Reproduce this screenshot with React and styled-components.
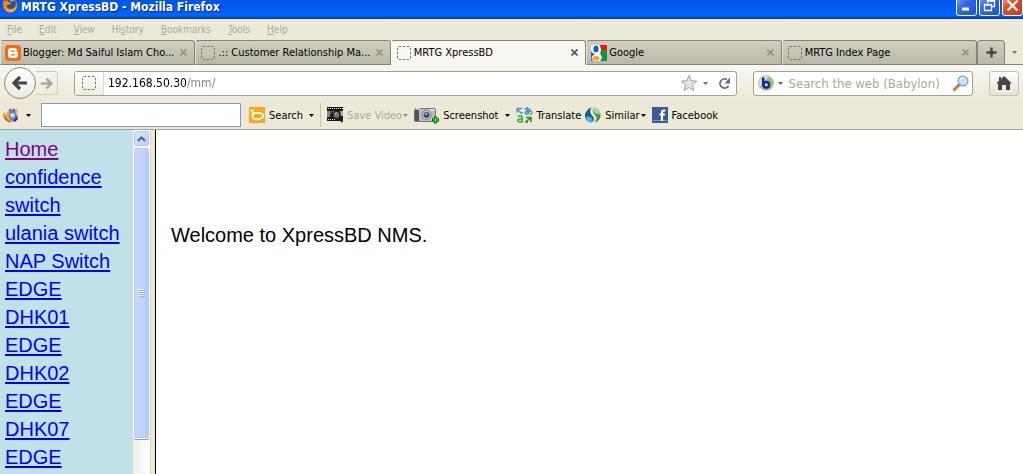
import React from "react"
import styled, { createGlobalStyle } from "styled-components"

const colors = {
  chrome: "#ece9d8",
  chromeLight: "#f8f7f1",
  edge: "#a3a193",
  edgeDark: "#85837a",
  disabled: "#aca899",
  field: "#7f9db9",
  sidebar: "#c0e1e8",
  link: "#0000ff",
  visited: "#800080",
}

const uiFont = `"DejaVu Sans Condensed", "DejaVu Sans", "Noto Sans", sans-serif`

const GlobalStyle = createGlobalStyle`
  * {
    box-sizing: border-box;
  }

  body {
    background: #fff;
    margin: 0;
  }

  button,
  input {
    font: inherit;
  }
`

const Browser = styled.div`
  display: flex;
  flex-direction: column;
  font-family: ${uiFont};
  font-size: 11px;
  height: 100vh;
  overflow: hidden;
`

const PlainButton = styled.button`
  align-items: center;
  background: none;
  border: 0;
  color: inherit;
  display: flex;
  flex: none;
  padding: 0;
`

/* Title bar */

const TitleBar = styled.header`
  align-items: flex-end;
  background: linear-gradient(#0054e8, #005cf4 50%, #0066ff 80%, #0058e8 88%, #0038a8);
  color: #fff;
  display: flex;
  flex: none;
  height: 19px;
  overflow: hidden;
  padding: 0 0 3px 2px;
`

const AppIcon = styled.span`
  display: flex;
  padding-bottom: 3px;
`

const WindowTitle = styled.div`
  flex: 1;
  font-size: 12px;
  font-weight: 700;
  line-height: 14px;
  padding: 0 0 2px 3px;
  text-shadow: 1px 1px 1px #0a2a80;
`

const WindowButton = styled(PlainButton)`
  background: ${props =>
    props.$close
      ? "linear-gradient(135deg, #f0a088, #e0502c 40%, #c83c18)"
      : "linear-gradient(135deg, #88a8f8, #3468e8 40%, #2050d0)"};
  border: 1px solid #fff;
  border-radius: 3px;
  height: 21px;
  justify-content: center;
  margin-left: 2px;
  width: 21px;
`

/* Menu bar */

const MenuBar = styled.nav`
  background: ${colors.chrome};
  color: ${colors.disabled};
  display: flex;
  flex: none;
  font-size: 10px;
  gap: 17px;
  height: 21px;
  padding-left: 7px;
`

const MenuKey = styled.span`
  text-decoration: underline;
`

/* Tabs */

const TabStrip = styled.div`
  background: linear-gradient(transparent 24px, ${colors.edgeDark} 24px), ${colors.chrome};
  display: flex;
  flex: none;
  height: 25px;
`

const TabItem = styled.div`
  align-items: center;
  background: ${props => (props.$active ? colors.chromeLight : "linear-gradient(#d0cebf, #bab8a9)")};
  border: 1px solid ${colors.edgeDark};
  border-bottom-color: ${props => (props.$active ? colors.chromeLight : colors.edgeDark)};
  border-left-color: ${props => (props.$active ? colors.chromeLight : "#e4e2d6")};
  border-radius: 3px 3px 0 0;
  display: flex;
  flex: 1;
  min-width: 0;
  padding: 0 6px 0 4px;
`

const TabLabel = styled(PlainButton)`
  color: #000;
  flex: 1;
  gap: 2px;
  min-width: 0;
  white-space: nowrap;
`

const TabClose = styled(PlainButton)`
  color: ${props => (props.$active ? "#444" : "#8c8b80")};
`

const NewTab = styled(PlainButton)`
  background: linear-gradient(#d0cebf, #bab8a9);
  border: 1px solid ${colors.edgeDark};
  border-radius: 3px 3px 0 0;
  justify-content: center;
  width: 28px;
`

const AllTabs = styled(PlainButton)`
  justify-content: center;
  width: 18px;
`

/* Navigation bar */

const NavBar = styled.div`
  align-items: center;
  background: linear-gradient(${colors.chromeLight}, ${colors.chrome});
  display: flex;
  flex: none;
  font-size: 12px;
  height: 36px;
  padding: 0 4px;
`

const BackButton = styled(PlainButton)`
  background: linear-gradient(#fff, #eceae0);
  border: 1px solid #8b8a80;
  border-radius: 50%;
  height: 32px;
  justify-content: center;
  width: 32px;
`

const ForwardButton = styled(PlainButton)`
  border: 1px solid #d0cdc0;
  border-left: 0;
  border-radius: 0 3px 3px 0;
  height: 24px;
  justify-content: center;
  width: 22px;
`

const Field = styled.div`
  align-items: center;
  background: #fff;
  border: 1px solid ${colors.edge};
  border-radius: 3px;
  display: flex;
  height: 25px;
`

const AddressField = styled(Field)`
  flex: 31;
  margin: 0 16px;
  padding-right: 5px;
`

const SearchField = styled(Field)`
  flex: 10;
  font-size: 13px;
  margin-right: 16px;
  padding: 0 3px 0 4px;
`

const SiteIdentity = styled(PlainButton)`
  background: linear-gradient(#fff, #eeece4);
  border-radius: 2px 0 0 2px;
  border-right: 1px solid #dcdad0;
  height: 23px;
  justify-content: center;
  width: 29px;
`

const TextInput = styled.input`
  background: none;
  border: 0;
  color: #000;
  flex: 1;
  height: 23px;
  min-width: 0;
  outline: 0;
  padding: 0 4px;

  &::placeholder {
    color: ${colors.disabled};
    opacity: 1;
  }
`

// the host name stays black while the path is dimmed
const AddressInput = styled(TextInput)`
  background: linear-gradient(90deg, #000 83px, #808080 83px);
  background-clip: text;
  color: transparent;
  caret-color: #000;
`

const HistoryButton = styled(PlainButton)`
  padding: 0 10px 0 5px;
`

const EngineButton = styled(PlainButton)`
  gap: 4px;
  margin-right: 2px;
`

const HomeButton = styled(PlainButton)`
  background: linear-gradient(#fdfdfa, #e6e3d6);
  border: 1px solid #c4c1b2;
  border-radius: 3px;
  height: 25px;
  justify-content: center;
  width: 30px;
`

/* Add-on toolbar */

const Toolbar = styled.div`
  align-items: center;
  background: ${colors.chrome};
  border-bottom: 1px solid ${colors.edge};
  display: flex;
  flex: none;
  height: 29px;
  padding-left: 3px;
`

const ToolInput = styled.input`
  background: #fff;
  border: 1px solid ${colors.field};
  height: 24px;
  margin-right: 8px;
  outline: 0;
  width: 200px;
`

const ToolButton = styled(PlainButton)`
  color: ${props => (props.disabled ? colors.disabled : "#000")};
  margin-right: ${props => props.$space || 6}px;
`

const ToolLabel = styled.span`
  padding-left: 4px;
`

const ToolCaret = styled.span`
  display: flex;
  padding-left: ${props => (props.$tight ? 1 : 6)}px;
`

const Divider = styled.div`
  background: #c5c2b2;
  height: 24px;
  margin-right: 6px;
  width: 1px;
`

/* Framed page */

const Page = styled.div`
  display: flex;
  flex: 1;
  font-family: "Liberation Sans", Arial, sans-serif;
  font-size: 20px;
  line-height: 28px;
  min-height: 0;
`

const Sidebar = styled.nav`
  background: ${colors.sidebar};
  flex: none;
  overflow: hidden;
  padding: 5px 5px 0;
  width: 133px;
`

const SideLink = styled.a`
  color: ${props => (props.$visited ? colors.visited : colors.link)};
  display: block;
  text-decoration-skip-ink: none;
  text-decoration-thickness: 2px;
  text-underline-offset: 2px;
`

const ScrollBar = styled.div`
  background: linear-gradient(90deg, #f0efe8, #fefefb);
  display: flex;
  flex: none;
  flex-direction: column;
  width: 17px;
`

const ScrollUp = styled(PlainButton)`
  background: linear-gradient(135deg, #dce6ff, #b8ccfa);
  border: 1px solid #fff;
  border-radius: 3px;
  box-shadow: inset 0 0 0 1px #b4c8f4;
  height: 17px;
  justify-content: center;
  width: 17px;
`

const ScrollThumb = styled.div`
  align-items: center;
  background: linear-gradient(90deg, #c9d7fc, #c0d0fc 70%, #b0c4f4);
  border: 1px solid #fff;
  border-radius: 3px;
  box-shadow: inset 0 0 0 1px #b8caf6, 0 1px 0 #7f9fd4;
  display: flex;
  height: 85%;
  justify-content: center;
  width: 17px;
`

const FrameEdge = styled.div`
  background: ${colors.chrome};
  border-left: 1px solid #d8d5c4;
  border-right: 1px solid #000;
  flex: none;
  width: 6px;
`

const Main = styled.main`
  background: #fff;
  color: #000;
  flex: 1;
  padding: 91px 15px 0;
`

const Message = styled.p`
  margin: 0;
`

/* Icons */

const Caret = ({ color = "#000" }) => (
  <svg width="5" height="3" viewBox="0 0 5 3" aria-hidden="true">
    <path d="M0 0h5L2.5 3z" fill={color} />
  </svg>
)

const BlankIcon = () => (
  <svg width="16" height="16" viewBox="0 0 16 16" aria-hidden="true">
    <rect x="1.5" y="1.5" width="13" height="13" rx="1.5" fill="none" stroke="#77766f" strokeDasharray="2.5 1.5" />
  </svg>
)

const CloseIcon = () => (
  <svg width="9" height="9" viewBox="0 0 9 9" aria-hidden="true">
    <path d="M1.5 1.5l6 6M7.5 1.5l-6 6" stroke="currentColor" strokeWidth="1.6" />
  </svg>
)

const FirefoxIcon = () => (
  <svg width="16" height="16" viewBox="0 0 16 16" aria-hidden="true">
    <circle cx="8" cy="8" r="7.5" fill="#d85a10" />
    <circle cx="8.5" cy="6.5" r="5.2" fill="#2a4f9c" />
    <path d="M6 2c3-1.5 6 .5 6 3-1-1-2-1-3-.5z" fill="#79b7e8" />
    <path d="M1 4C1 11 3.5 15 8 15.5 13 15.5 16 11 15 6c-.5 3-2.5 6-6 6-3.5 0-4.5-2-4-4l3-.5 1.5-1.5-3-1L5 3 3.500 4.500z" fill="#f08a1c" />
    <path d="M2 9c1 3 4 5 7.5 4.500C12 13 13.500 11 14 9c0 4-3 6.500-6 6S2.500 12 2 9z" fill="#fcc02c" />
  </svg>
)

const BloggerIcon = () => (
  <svg width="16" height="16" viewBox="0 0 16 16" aria-hidden="true">
    <rect width="16" height="16" rx="3" fill="#fb6c10" />
    <path
      d="M6 3h3a3 3 0 0 1 3 3c0 1 .2 1.200 1 1.500V10a3 3 0 0 1-3 3H6a3 3 0 0 1-3-3V6a3 3 0 0 1 3-3zM6 5.500v1.300h3.500V5.500zM6 9.300v1.300h4.300V9.300z"
      fill="#fff"
      fillRule="evenodd"
    />
  </svg>
)

const GoogleIcon = () => (
  <svg width="16" height="16" viewBox="0 0 16 16" aria-hidden="true">
    <rect width="16" height="16" fill="#fff" />
    <path d="M8 0h8v5h-6z" fill="#f01414" />
    <path d="M10 5h6v11H9l2-4-2-3z" fill="#129440" />
    <path d="M0 6l4 4-2 2 1 4H0z" fill="#2a62c8" />
    <circle cx="5" cy="4" r="4.8" fill="#fff" />
    <ellipse cx="5" cy="4" rx="2.6" ry="3.5" fill="#1c58c4" />
    <path d="M5 8l4 2" stroke="#fff" strokeWidth="3" />
    <ellipse cx="5.500" cy="13" rx="5" ry="3.5" fill="#fff" />
    <ellipse cx="5" cy="13.200" rx="3.5" ry="2.200" fill="#f5a81c" />
  </svg>
)

const PlusIcon = () => (
  <svg width="11" height="11" viewBox="0 0 11 11" aria-hidden="true">
    <path d="M5.5 .5v10M.5 5.5h10" stroke="#40484c" strokeWidth="2.4" />
  </svg>
)

const ArrowIcon = ({ flip, size = 16, color }) => (
  <svg width={size} height={size} viewBox="0 0 16 16" aria-hidden="true">
    <path
      d={flip ? "M1 8h12M8 2l6 6-6 6" : "M15 8H3M8 2L2 8l6 6"}
      fill="none"
      stroke={color}
      strokeWidth="3.2"
    />
  </svg>
)

const StarIcon = () => (
  <svg width="18" height="18" viewBox="0 0 18 18" aria-hidden="true">
    <path
      d="M9 1.500l2.200 5.200 5.500.4-4.200 3.700 1.300 5.700L9 13.500l-4.800 3 1.300-5.700L1.300 7.100l5.500-.4z"
      fill="#e2e2e2"
      stroke="#a0a0a0"
    />
  </svg>
)

const ReloadIcon = () => (
  <svg width="13" height="13" viewBox="0 0 13 13" aria-hidden="true">
    <path d="M9 2.500A4.600 4.600 0 1 0 10.500 9" fill="none" stroke="#6a6a6a" strokeWidth="1.800" />
    <path d="M12 .5v6H6.500z" fill="#6a6a6a" />
  </svg>
)

const BabylonIcon = () => (
  <svg width="16" height="16" viewBox="0 0 16 16" aria-hidden="true">
    <circle cx="8" cy="8" r="7.5" fill="#8ccc60" stroke="#b4c8b8" />
    <path d="M8 .5a7.500 7.500 0 0 0-6 11L6 7l5-6z" fill="#d4e4f4" />
    <ellipse cx="8.300" cy="9.800" rx="2.800" ry="2.800" fill="#dce8f8" stroke="#1c24a8" strokeWidth="2.600" />
    <path d="M5.200 2.500v8" stroke="#1c24a8" strokeWidth="2.600" />
  </svg>
)

const MagnifierIcon = () => (
  <svg width="17" height="17" viewBox="0 0 17 17" aria-hidden="true">
    <path d="M7 10l-5.500 5.500" stroke="#d87828" strokeWidth="3" />
    <path d="M8 9l-2 2" stroke="#707880" strokeWidth="2" />
    <circle cx="11" cy="6" r="4.800" fill="#c4e4fa" stroke="#7fa4d0" strokeWidth="1.400" />
    <path d="M8 5a3.500 3.500 0 0 1 4-2" fill="none" stroke="#fff" strokeWidth="1.400" />
  </svg>
)

const HomeIcon = () => (
  <svg width="16" height="14" viewBox="0 0 16 14" aria-hidden="true">
    <path d="M8 0l8 7.500h-2V14h-4V9H6v5H2V7.500H0L3 4.800V1h2v2z" fill="#43474a" />
  </svg>
)

const FoxIcon = () => (
  <svg width="17" height="16" viewBox="0 0 17 16" aria-hidden="true">
    <path d="M4 6l2-3 1-2 2 2 2-2 1 2 2-1-1 3 2 3-1 4-3 2H8z" fill="#8c5cae" />
    <path d="M0 5.500l2 .5 1 2 1-3 2-2 1 2-1 4 1 3 3 2-3 1-4-2-2-3-1-3z" fill="#f4aa28" />
    <path d="M0 8l2 5 4 2.500 3-1-3-1-3-3z" fill="#d06820" />
    <path d="M6 6l3-2 3 1 2 3-2 4-3 1-3-3z" fill="#4c8cdc" />
    <path d="M7 7l3-1 2 2-2 3-2-1z" fill="#d4ecff" />
    <path d="M12 4l3-1-1 3 1 2-1 2-1-3z" fill="#f0b060" />
    <path d="M14 9l1 3-3 3-2-1 3-3z" fill="#443078" />
  </svg>
)

const BingIcon = () => (
  <svg width="16" height="16" viewBox="0 0 16 16" aria-hidden="true">
    <rect width="16" height="16" fill="#ffa51a" />
    <path d="M1 3.500h3l-.5 5" fill="none" stroke="#fff" strokeWidth="1.600" />
    <path d="M3.500 7.500C6 5 13.500 5.500 14 8.500c.3 4-10 5.500-10.500 1z" fill="none" stroke="#fff" strokeWidth="1.900" />
  </svg>
)

const VideoIcon = () => (
  <svg width="16" height="16" viewBox="0 0 16 16" aria-hidden="true">
    <rect width="16" height="14" fill="#181818" />
    <path d="M1 1.500h15M1 12.500h7" stroke="#eee" strokeDasharray="1 1" />
    <path d="M0 4h4l-1 6H0z" fill="#888" />
    <path d="M5 4h3l-2 4z" fill="#666" />
    <path d="M13 4h3v5h-2z" fill="#aaa" />
    <circle cx="9.500" cy="8" r="3.400" fill="#777" stroke="#222" strokeWidth="1.200" />
    <path d="M8 7c0-1 1-1.500 2-1.500" fill="none" stroke="#ddd" />
    <path d="M12 10.500L15.500 15" stroke="#222" strokeWidth="2.200" />
  </svg>
)

const CameraIcon = () => (
  <svg width="25" height="17" viewBox="0 0 25 17" aria-hidden="true">
    <rect x=".5" y="1.500" width="21" height="13" rx="1" fill="#bcbcc0" stroke="#77777c" />
    <rect x="1" y="3" width="4" height="11" fill="#50505a" />
    <path d="M2 1h4M16 3h4" stroke="#eee" strokeWidth="1.500" />
    <circle cx="12.500" cy="8" r="4.500" fill="#d8d8dc" stroke="#77777c" />
    <circle cx="12.500" cy="8" r="3" fill="#354878" />
    <circle cx="12" cy="7" r="1" fill="#b8d0f4" />
    <path d="M21.500 9.500v7M18 13h7" stroke="#126c18" strokeWidth="3.400" />
    <path d="M21.500 10.500v5M19 13h5" stroke="#3cd84a" strokeWidth="1.600" />
  </svg>
)

const TranslateIcon = () => (
  <svg width="17" height="16" viewBox="0 0 17 16" aria-hidden="true">
    <g fill="none" strokeWidth="1.300">
      <path d="M1 1.500h5M1 1.500v4M1 2l4 4h2" stroke="#3c94c4" />
      <path d="M8.500 2h6M11 0c0 3 .2 5 1 7M14 3c-1 3-3 4.500-4.500 4-1.500-2 2-4 5-3.200C17 5 16 7.500 13.500 7.500" stroke="#3c94c4" />
      <path d="M2 9.200c3-1 4.200 0 4.200 1.800v4.500M6 12H3.500c-2.200 0-2.200 3 0 3C5 15 6 14 6 13.500" stroke="#48a83c" strokeWidth="1.700" />
      <path d="M10 15l4.500-4.500M10 10.500h5V15M9 14.800h3" stroke="#2c8c28" strokeWidth="1.700" />
    </g>
  </svg>
)

const SimilarIcon = () => (
  <svg width="16" height="16" viewBox="0 0 16 16" aria-hidden="true">
    <path d="M6.500 0C2 3 0 5 0 9c0 3.500 3 6 6.500 6.500C9.500 14 9.500 11 7.500 9 5 6.500 4.500 4 6.500 0z" fill="#1c5c90" />
    <path d="M.5 10c2-1 5-.5 6.500 1 1 1.500.5 3.500-.5 4.500C3 15 1 13 .5 10z" fill="#54b0dc" />
    <path d="M9 .5c4 1 6.500 4 6.500 8 0 4-3 6.500-6 7 2.500-3 2.500-5 .5-7.500C7.500 5.500 7 3 9 .5z" fill="#3c9c48" />
    <path d="M9 .5c3.500 1 5.500 3.500 6 6.500-2 .5-4.500 0-6-2C8 3.500 8 2 9 .5z" fill="#a8d8a0" />
  </svg>
)

const FacebookIcon = () => (
  <svg width="16" height="16" viewBox="0 0 16 16" aria-hidden="true">
    <rect width="16" height="16" fill="#3b5998" />
    <path d="M1 13.500h14" stroke="#8094c0" />
    <path d="M13.500 3.500H12c-1.500 0-2 .5-2 2V14M7.500 7.500h5.500" fill="none" stroke="#fff" strokeWidth="2.200" />
  </svg>
)

const ChevronUp = () => (
  <svg width="9" height="6" viewBox="0 0 9 6" aria-hidden="true">
    <path d="M1 5l3.500-3.500L8 5" fill="none" stroke="#4d6185" strokeWidth="2" />
  </svg>
)

const GripIcon = () => (
  <svg width="7" height="8" viewBox="0 0 7 8" aria-hidden="true">
    <path d="M0 .5h6M0 2.500h6M0 4.500h6M0 6.500h6" stroke="#eef4fe" />
    <path d="M1 1.500h6M1 3.500h6M1 5.500h6M1 7.500h6" stroke="#8cb0f8" />
  </svg>
)

const MinimizeIcon = () => (
  <svg width="13" height="13" viewBox="0 0 13 13" aria-hidden="true">
    <path d="M2 10h7" stroke="#fff" strokeWidth="3" />
  </svg>
)

const RestoreIcon = () => (
  <svg width="13" height="13" viewBox="0 0 13 13" aria-hidden="true">
    <path d="M4.500 4V1.500h7v6H9M4.500 2h7M1.500 5.500h7v6h-7zM1 6h8" fill="none" stroke="#fff" strokeWidth="1.300" />
  </svg>
)

const ExitIcon = () => (
  <svg width="13" height="13" viewBox="0 0 13 13" aria-hidden="true">
    <path d="M1.500 1.500l10 10M11.500 1.500l-10 10" stroke="#fff" strokeWidth="2.200" />
  </svg>
)

const menus = [
  ["", "F", "ile"],
  ["", "E", "dit"],
  ["", "V", "iew"],
  ["Hi", "s", "tory"],
  ["", "B", "ookmarks"],
  ["", "T", "ools"],
  ["", "H", "elp"],
]

const tabs = [
  { label: "Blogger: Md Saiful Islam Cho...", icon: <BloggerIcon /> },
  { label: ".:: Customer Relationship Ma...", icon: <BlankIcon /> },
  { label: "MRTG XpressBD", icon: <BlankIcon />, active: true },
  { label: "Google", icon: <GoogleIcon /> },
  { label: "MRTG Index Page", icon: <BlankIcon /> },
]

const tools = [
  { label: "Save Video", icon: <VideoIcon />, caret: "#8c8b80", tight: true, disabled: true },
  { label: "Screenshot", icon: <CameraIcon />, caret: "#000" },
  { label: "Translate", icon: <TranslateIcon />, space: 4 },
  { label: "Similar", icon: <SimilarIcon />, caret: "#000", tight: true },
  { label: "Facebook", icon: <FacebookIcon /> },
]

const links = [
  "Home",
  "confidence switch",
  "ulania switch",
  "NAP Switch",
  "EDGE DHK01",
  "EDGE DHK02",
  "EDGE DHK07",
  "EDGE",
]

const Tab = ({ label, icon, active }) => (
  <TabItem $active={active}>
    <TabLabel role="tab" aria-selected={!!active}>
      {icon}
      {label}
    </TabLabel>
    <TabClose $active={active} aria-label={`Close ${label}`}>
      <CloseIcon />
    </TabClose>
  </TabItem>
)

const Tool = ({ label, icon, caret, tight, space, disabled }) => (
  <ToolButton disabled={disabled} $space={space}>
    {icon}
    <ToolLabel>{label}</ToolLabel>
    {caret && (
      <ToolCaret $tight={tight}>
        <Caret color={caret} />
      </ToolCaret>
    )}
  </ToolButton>
)

const App = () => (
  <Browser>
    <GlobalStyle />
    <TitleBar>
      <AppIcon>
        <FirefoxIcon />
      </AppIcon>
      <WindowTitle>MRTG XpressBD - Mozilla Firefox</WindowTitle>
      <WindowButton aria-label="Minimize">
        <MinimizeIcon />
      </WindowButton>
      <WindowButton aria-label="Restore">
        <RestoreIcon />
      </WindowButton>
      <WindowButton $close aria-label="Close">
        <ExitIcon />
      </WindowButton>
    </TitleBar>

    <MenuBar>
      {menus.map(([before, key, after]) => (
        <PlainButton key={after}>
          <span>
            {before}
            <MenuKey>{key}</MenuKey>
            {after}
          </span>
        </PlainButton>
      ))}
    </MenuBar>

    <TabStrip role="tablist">
      {tabs.map(tab => (
        <Tab key={tab.label} {...tab} />
      ))}
      <NewTab aria-label="New tab">
        <PlusIcon />
      </NewTab>
      <AllTabs aria-label="List all tabs">
        <Caret color="#77766f" />
      </AllTabs>
    </TabStrip>

    <NavBar>
      <BackButton aria-label="Back">
        <ArrowIcon color="#40484c" />
      </BackButton>
      <ForwardButton aria-label="Forward">
        <ArrowIcon flip size={13} color="#a8a89f" />
      </ForwardButton>
      <AddressField>
        <SiteIdentity aria-label="Site identity">
          <BlankIcon />
        </SiteIdentity>
        <AddressInput aria-label="Address" defaultValue="192.168.50.30/mm/" />
        <PlainButton aria-label="Bookmark this page">
          <StarIcon />
        </PlainButton>
        <HistoryButton aria-label="History">
          <Caret color="#666" />
        </HistoryButton>
        <PlainButton aria-label="Reload">
          <ReloadIcon />
        </PlainButton>
      </AddressField>
      <SearchField>
        <EngineButton aria-label="Search engine">
          <BabylonIcon />
          <Caret color="#666" />
        </EngineButton>
        <TextInput aria-label="Search the web" placeholder="Search the web (Babylon)" />
        <PlainButton aria-label="Search">
          <MagnifierIcon />
        </PlainButton>
      </SearchField>
      <HomeButton aria-label="Home">
        <HomeIcon />
      </HomeButton>
    </NavBar>

    <Toolbar>
      <ToolButton aria-label="Toolbar options" $space={10}>
        <FoxIcon />
        <ToolCaret>
          <Caret />
        </ToolCaret>
      </ToolButton>
      <ToolInput aria-label="Toolbar search" />
      <Tool label="Search" icon={<BingIcon />} caret="#000" />
      <Divider />
      {tools.map(tool => (
        <Tool key={tool.label} {...tool} />
      ))}
    </Toolbar>

    <Page>
      <Sidebar>
        {links.map(link => (
          <SideLink key={link} href="#" $visited={link === "Home"}>
            {link}
          </SideLink>
        ))}
      </Sidebar>
      <ScrollBar>
        <ScrollUp aria-label="Scroll up">
          <ChevronUp />
        </ScrollUp>
        <ScrollThumb>
          <GripIcon />
        </ScrollThumb>
      </ScrollBar>
      <FrameEdge />
      <Main>
        <Message>Welcome to XpressBD NMS.</Message>
      </Main>
    </Page>
  </Browser>
)

export default App
